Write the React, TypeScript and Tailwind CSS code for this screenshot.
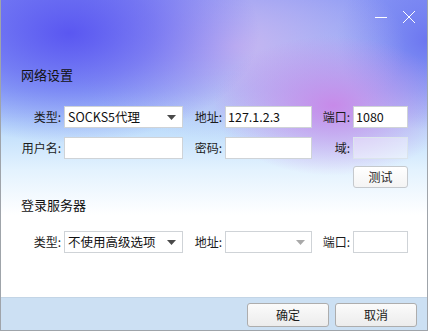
const font = { fontFamily: '"Noto Sans CJK SC", "Noto Sans", sans-serif' };

function Label({ text }: { text: string }) {
  return <div className="flex h-[22px] items-center justify-end text-[12px] text-[#1b1b1b]">{text}</div>;
}

function Field({ value, disabled }: { value?: string; disabled?: boolean }) {
  return (
    <div
      className={
        "flex h-[22px] items-center border px-[2px] text-[12.5px] text-[#111] " +
        (disabled ? "border-[#dbe4ec] bg-white/40" : "border-[#cfd3d7] bg-white")
      }
    >
      {value}
    </div>
  );
}

function Select({ value, disabled }: { value?: string; disabled?: boolean }) {
  return (
    <div className="flex h-[22px] items-center justify-between border border-[#cfd3d7] bg-white pl-[3px] pr-[6px] text-[12.5px] text-[#111]">
      <span>{value}</span>
      <svg width="9" height="5" viewBox="0 0 9 5">
        <path d="M0 0h9L4.5 5z" fill={disabled ? "#a9a9a9" : "#4a4a4a"} />
      </svg>
    </div>
  );
}

function Button({ text, className }: { text: string; className: string }) {
  return (
    <button
      className={
        "flex items-center justify-center rounded-[3px] border border-[#adadad] bg-gradient-to-b from-[#fbfbfb] to-[#ececec] text-[12px] text-[#1b1b1b] " +
        className
      }
    >
      {text}
    </button>
  );
}

export default function App() {
  return (
    <div
      style={font}
      className="relative flex h-[331px] w-[428px] flex-col overflow-hidden border-x border-b border-[#9fa4aa] bg-white"
    >
      <div className="absolute inset-0 bg-[radial-gradient(ellipse_190px_110px_at_16%_10%,#5a57f1_0%,rgba(90,87,241,0.6)_45%,rgba(90,87,241,0)_100%),radial-gradient(ellipse_120px_70px_at_78%_32%,#c78ae9_0%,rgba(199,138,233,0)_100%),radial-gradient(ellipse_170px_95px_at_55%_14%,#c7b6f1_0%,rgba(199,182,241,0)_100%),radial-gradient(ellipse_90px_90px_at_100%_12%,#6c76f0_0%,rgba(108,118,240,0)_100%),linear-gradient(to_bottom,#8c9cf5_0px,#a2c2f9_90px,#bcdcfb_125px,#e3f2fe_170px,#ffffff_215px)]" />

      <div className="relative flex h-[32px] items-center justify-end gap-[14px] pr-[11px] pt-[2px]">
        <svg width="14" height="14" viewBox="0 0 14 14">
          <path d="M1 7.5h12" stroke="#fff" strokeWidth="1" />
        </svg>
        <svg width="14" height="14" viewBox="0 0 14 14">
          <path d="M1 1l12 12M13 1L1 13" stroke="#fff" strokeWidth="1" />
        </svg>
      </div>

      <div className="relative flex flex-col pl-[20px]">
        <div className="mt-[33px] h-[20px] text-[13px] leading-[20px] text-[#111]">网络设置</div>

        <div className="mt-[21px] grid grid-cols-[40px_119px_36px_87px_35px_55px] gap-x-[3px] gap-y-[9px]">
          <Label text="类型:" />
          <Select value="SOCKS5代理" />
          <Label text="地址:" />
          <Field value="127.1.2.3" />
          <Label text="端口:" />
          <Field value="1080" />

          <Label text="用户名:" />
          <Field />
          <Label text="密码:" />
          <Field />
          <Label text="域:" />
          <Field disabled />
        </div>

        <div className="mt-[7px] flex pl-[332px]">
          <Button text="测试" className="h-[22px] w-[55px] border-[#c5c9cd] from-white to-[#f4f4f4]" />
        </div>

        <div className="mt-[7px] h-[20px] text-[13px] leading-[20px] text-[#111]">登录服务器</div>

        <div className="mt-[16px] grid grid-cols-[40px_119px_36px_87px_35px_55px] gap-x-[3px]">
          <Label text="类型:" />
          <Select value="不使用高级选项" />
          <Label text="地址:" />
          <Select disabled />
          <Label text="端口:" />
          <Field />
        </div>
      </div>

      <div className="flex-1" />

      <div className="relative flex h-[33px] justify-end gap-[6px] border-t border-[#c3d5e6] bg-[#cce0f3] pr-[10px] pt-[5px]">
        <Button text="确定" className="h-[24px] w-[82px]" />
        <Button text="取消" className="h-[24px] w-[82px]" />
      </div>
    </div>
  );
}
